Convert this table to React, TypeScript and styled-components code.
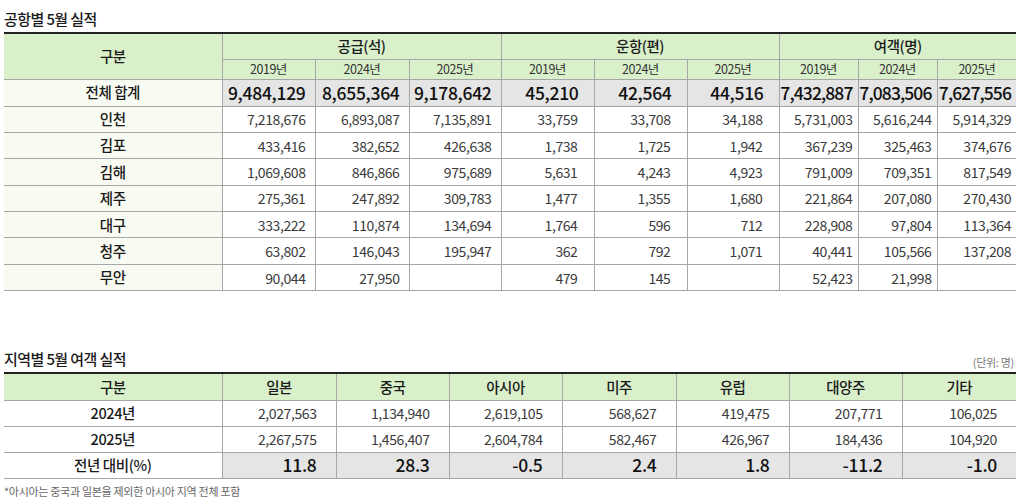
import React from "react";
import styled, { createGlobalStyle } from "styled-components";

const GlobalStyle = createGlobalStyle`
  html, body { margin: 0; padding: 0; background: #ffffff; }
  body { font-family: "Noto Sans CJK KR", "Noto Sans", sans-serif; color: #222; }
  * { box-sizing: border-box; }
`;

const GREEN = "#d9f0cb";
const GRAY = "#e5e5e5";
const LINE = "#a6a6a6";
const TINT = "#f8fbf1";

const Page = styled.div`
  width: 1022px;
  padding: 0 6px 0 4px;
  display: flex;
  flex-direction: column;
`;

const TitleRow = styled.div<{ $top: number }>`
  display: flex;
  align-items: flex-end;
  justify-content: space-between;
  margin-top: ${(p) => p.$top}px;
  height: 22px;
  margin-bottom: 3px;
`;

const Title = styled.h2`
  margin: 0;
  font-size: 15px;
  font-weight: 500;
  letter-spacing: -0.6px;
  line-height: 20px;
  color: #1a1a1a;
`;

const Unit = styled.span`
  font-size: 11px;
  color: #777;
  letter-spacing: -0.3px;
  line-height: 14px;
  padding-right: 2px;
`;

const Table = styled.table`
  width: 1012px;
  border-collapse: collapse;
  table-layout: fixed;
  border-top: 2px solid #222;
  border-bottom: 1px solid ${LINE};
`;

const HeadCell = styled.th<{ $h: number; $sub?: boolean; $left?: boolean }>`
  background: ${GREEN};
  height: ${(p) => p.$h}px;
  padding: 0;
  text-align: center;
  font-size: ${(p) => (p.$sub ? 12.5 : 14.5)}px;
  font-weight: ${(p) => (p.$sub ? 400 : 500)};
  color: ${(p) => (p.$sub ? "#333" : "#1a1a1a")};
  letter-spacing: -0.5px;
  border-left: ${(p) => (p.$left ? "none" : `1px solid ${LINE}`)};
  border-bottom: 1px solid ${LINE};
  line-height: 1;
`;

const LabelCell = styled.td<{ $h: number; $tint?: boolean }>`
  height: ${(p) => p.$h}px;
  padding: 0;
  text-align: center;
  background: ${(p) => (p.$tint ? TINT : "#ffffff")};
  font-size: 14.5px;
  font-weight: 500;
  color: #1a1a1a;
  letter-spacing: -0.4px;
  border-bottom: 1px solid ${LINE};
  line-height: 1;
`;

const NumCell = styled.td<{ $total?: boolean; $pad: number; $tight?: boolean }>`
  padding: 0 ${(p) => p.$pad}px 0 0;
  text-align: right;
  background: ${(p) => (p.$total ? GRAY : "#ffffff")};
  font-size: ${(p) => (p.$total ? 17.5 : 14)}px;
  font-weight: ${(p) => (p.$total ? 500 : 400)};
  color: ${(p) => (p.$total ? "#111" : "#3a3a3a")};
  letter-spacing: ${(p) => (p.$tight ? -0.9 : p.$total ? -0.3 : -0.4)}px;
  border-left: 1px solid ${LINE};
  border-bottom: 1px solid ${LINE};
  line-height: 1;
  white-space: nowrap;
`;

const Footnote = styled.p`
  margin: 5px 0 0 0;
  font-size: 11px;
  color: #666;
  letter-spacing: -0.3px;
  line-height: 14px;
`;

type AirRow = { name: string; v: (string | null)[]; total?: boolean };

const airRows: AirRow[] = [
  {
    name: "전체 합계",
    total: true,
    v: ["9,484,129", "8,655,364", "9,178,642", "45,210", "42,564", "44,516", "7,432,887", "7,083,506", "7,627,556"],
  },
  { name: "인천", v: ["7,218,676", "6,893,087", "7,135,891", "33,759", "33,708", "34,188", "5,731,003", "5,616,244", "5,914,329"] },
  { name: "김포", v: ["433,416", "382,652", "426,638", "1,738", "1,725", "1,942", "367,239", "325,463", "374,676"] },
  { name: "김해", v: ["1,069,608", "846,866", "975,689", "5,631", "4,243", "4,923", "791,009", "709,351", "817,549"] },
  { name: "제주", v: ["275,361", "247,892", "309,783", "1,477", "1,355", "1,680", "221,864", "207,080", "270,430"] },
  { name: "대구", v: ["333,222", "110,874", "134,694", "1,764", "596", "712", "228,908", "97,804", "113,364"] },
  { name: "청주", v: ["63,802", "146,043", "195,947", "362", "792", "1,071", "40,441", "105,566", "137,208"] },
  { name: "무안", v: ["90,044", "27,950", null, "479", "145", null, "52,423", "21,998", null] },
];

const airCols = [218, 93, 94, 92, 93, 93, 92, 79, 79, 79];
const years = ["2019년", "2024년", "2025년"];
const groups = ["공급(석)", "운항(편)", "여객(명)"];

const padFor = (i: number, total?: boolean) => {
  const g = Math.floor(i / 3);
  if (g === 0) return 9;
  if (g === 1) return total ? 15 : 16;
  return 5;
};

type RegionRow = { name: string; v: string[]; total?: boolean };
const regionHead = ["일본", "중국", "아시아", "미주", "유럽", "대양주", "기타"];
const regionRows: RegionRow[] = [
  { name: "2024년", v: ["2,027,563", "1,134,940", "2,619,105", "568,627", "419,475", "207,771", "106,025"] },
  { name: "2025년", v: ["2,267,575", "1,456,407", "2,604,784", "582,467", "426,967", "184,436", "104,920"] },
  { name: "전년 대비(%)", total: true, v: ["11.8", "28.3", "-0.5", "2.4", "1.8", "-11.2", "-1.0"] },
];
const regionCols = [218, 114, 113, 113, 114, 113, 113, 114];

export default function App() {
  return (
    <Page>
      <GlobalStyle />
      <TitleRow $top={7}>
        <Title>공항별 5월 실적</Title>
      </TitleRow>
      <Table>
        <colgroup>
          {airCols.map((w, i) => (
            <col key={i} style={{ width: w }} />
          ))}
        </colgroup>
        <thead>
          <tr>
            <HeadCell $h={26} $left rowSpan={2}>
              구분
            </HeadCell>
            {groups.map((g) => (
              <HeadCell key={g} $h={26} colSpan={3}>
                {g}
              </HeadCell>
            ))}
          </tr>
          <tr>
            {groups.map((g) =>
              years.map((y) => (
                <HeadCell key={g + y} $h={20} $sub>
                  {y}
                </HeadCell>
              ))
            )}
          </tr>
        </thead>
        <tbody>
          {airRows.map((r) => (
            <tr key={r.name}>
              <LabelCell $h={r.total ? 27 : 26.4} $tint>
                {r.name}
              </LabelCell>
              {r.v.map((v, i) => (
                <NumCell key={i} $total={r.total} $pad={padFor(i, r.total)} $tight={r.total && i >= 6}>
                  {v ?? ""}
                </NumCell>
              ))}
            </tr>
          ))}
        </tbody>
      </Table>

      <TitleRow $top={56}>
        <Title>지역별 5월 여객 실적</Title>
        <Unit>(단위: 명)</Unit>
      </TitleRow>
      <Table>
        <colgroup>
          {regionCols.map((w, i) => (
            <col key={i} style={{ width: w }} />
          ))}
        </colgroup>
        <thead>
          <tr>
            <HeadCell $h={27} $left>
              구분
            </HeadCell>
            {regionHead.map((h) => (
              <HeadCell key={h} $h={27}>
                {h}
              </HeadCell>
            ))}
          </tr>
        </thead>
        <tbody>
          {regionRows.map((r) => (
            <tr key={r.name}>
              <LabelCell $h={26}>{r.name}</LabelCell>
              {r.v.map((v, i) => (
                <NumCell key={i} $total={r.total} $pad={19}>
                  {v}
                </NumCell>
              ))}
            </tr>
          ))}
        </tbody>
      </Table>
      <Footnote>*아시아는 중국과 일본을 제외한 아시아 지역 전체 포함</Footnote>
    </Page>
  );
}
